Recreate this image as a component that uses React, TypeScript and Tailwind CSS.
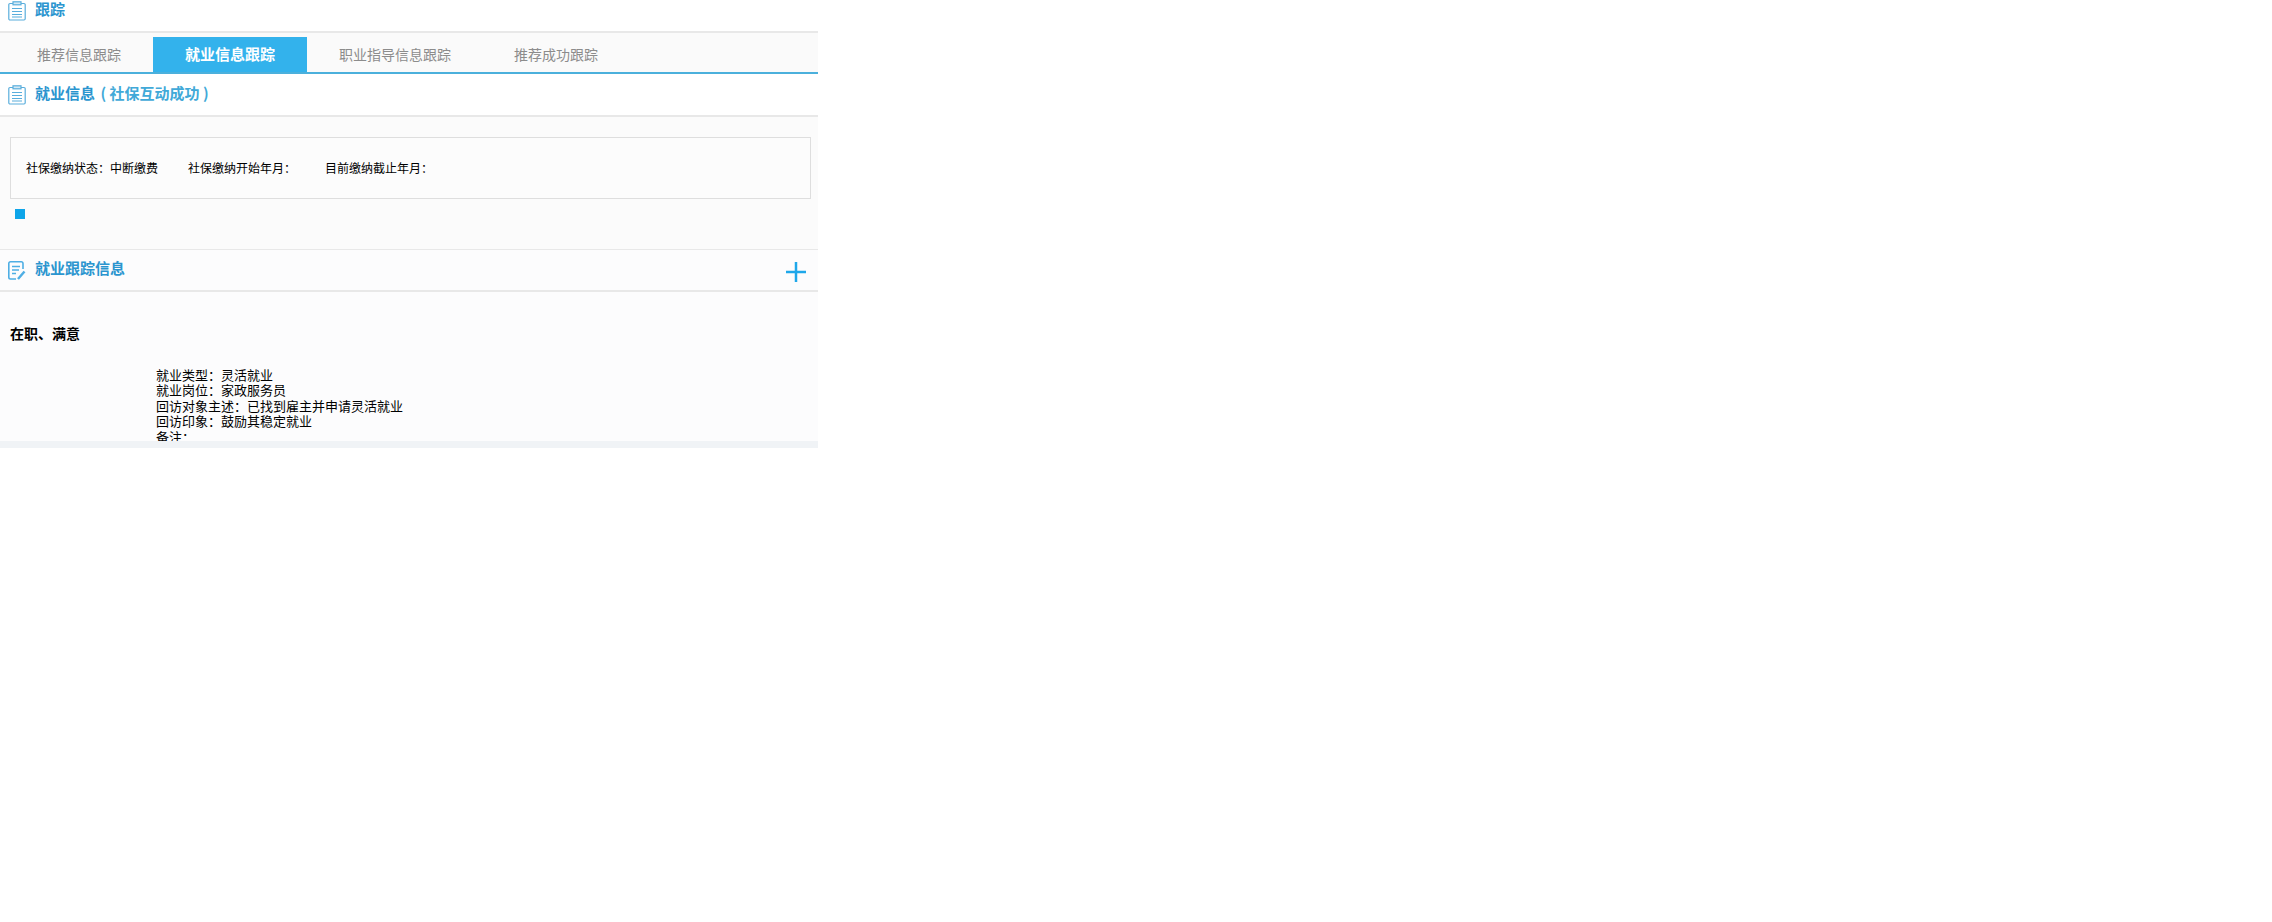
const font = "font-['Noto_Sans_CJK_SC',sans-serif]";

function ClipboardIcon() {
  return (
    <svg width="18" height="20" viewBox="0 0 18 20" fill="none" stroke="#5aaedc" strokeWidth="1.2">
      <path d="M5 2.5H2a1.2 1.2 0 0 0-1.2 1.2v14.1A1.2 1.2 0 0 0 2 19h14a1.2 1.2 0 0 0 1.2-1.2V3.7A1.2 1.2 0 0 0 16 2.5h-3" />
      <rect x="5" y="0.8" width="8" height="3" fill="#d5eaf6" />
      <path d="M4 7.5h10M4 10.5h10M4 13.5h10M4 16h10" />
    </svg>
  );
}

function EditIcon() {
  return (
    <svg width="18" height="19" viewBox="0 0 18 19" fill="none" stroke="#4eaee4" strokeWidth="1.6">
      <path d="M8 18H2.5A1.7 1.7 0 0 1 .8 16.3V2.5A1.7 1.7 0 0 1 2.5.8h10.8A1.7 1.7 0 0 1 15 2.5V8" />
      <path d="M4 5.5h8M4 9h7M4 12.5h4" />
      <path d="M10 18l6.5-7.5" strokeWidth="2.4" />
    </svg>
  );
}

function SectionTitle({ icon, children }: { icon: React.ReactNode; children: React.ReactNode }) {
  return (
    <div className="flex items-center gap-[9px] pl-2">
      {icon}
      <span className="mb-[3px] text-[15px] font-bold text-[#2b95cf]">{children}</span>
    </div>
  );
}

const tabs = ["推荐信息跟踪", "就业信息跟踪", "职业指导信息跟踪", "推荐成功跟踪"];

export default function App() {
  return (
    <div className={`w-[818px] bg-white ${font}`}>
      <div className="h-[33px] border-b-2 border-[#e8e8e8] pb-[10px] flex items-center">
        <SectionTitle icon={<ClipboardIcon />}>跟踪</SectionTitle>
      </div>

      <div className="h-[41px] flex items-end bg-[#fafafa] border-b-2 border-[#4bb0dc] pl-[37px]">
        {tabs.map((t, i) =>
          i === 1 ? (
            <div key={t} className="w-[154px] h-[35px] ml-[32px] mr-[32px] flex items-center justify-center bg-[#33b2ec] text-white text-[15px] font-bold">
              {t}
            </div>
          ) : (
            <div key={t} className={`h-[35px] flex items-center text-[14px] text-[#8c8c8c] ${i === 2 ? "mr-[63px]" : ""}`}>
              {t}
            </div>
          )
        )}
      </div>

      <div className="h-[43px] flex items-center border-b-2 border-[#e8e8e8]">
        <SectionTitle icon={<ClipboardIcon />}>
          就业信息 <span className="pl-[2px] text-[#41a9d8]">( 社保互动成功 )</span>
        </SectionTitle>
      </div>

      <div className="h-[132px] bg-[#fbfbfb] pt-5 pl-[10px] pr-[7px]">
        <div className="h-[62px] border border-[#dedede] bg-[#fcfcfc] flex items-center pl-[15px] text-[12px] text-black">
          <span className="w-[162px]">社保缴纳状态：中断缴费</span>
          <span className="w-[137px]">社保缴纳开始年月：</span>
          <span>目前缴纳截止年月：</span>
        </div>
        <div className="w-[10px] h-[10px] mt-[10px] ml-[5px] bg-[#0ea5e9]" />
      </div>

      <div className="h-[43px] flex items-center justify-between bg-[#fcfcfd] border-t border-b-2 border-[#e8e8e8] pr-[12px]">
        <SectionTitle icon={<EditIcon />}>就业跟踪信息</SectionTitle>
        <svg width="20" height="20" viewBox="0 0 20 20" className="mt-1" fill="none" stroke="#1ea7ea" strokeWidth="2.5">
          <path d="M0 10h20M10 0v20" />
        </svg>
      </div>

      <div className="h-[149px] overflow-hidden bg-[#fcfcfd] pl-[10px] text-black">
        <div className="pt-[31px] text-[14px] font-bold leading-5">在职、满意</div>
        <div className="pl-[146px] pt-[24px] text-[13px] leading-[15.4px]">
          <div>就业类型：灵活就业</div>
          <div>就业岗位：家政服务员</div>
          <div>回访对象主述：已找到雇主并申请灵活就业</div>
          <div>回访印象：鼓励其稳定就业</div>
          <div>备注：</div>
        </div>
      </div>
      <div className="h-[7px] bg-[#f0f3f6]" />
    </div>
  );
}
